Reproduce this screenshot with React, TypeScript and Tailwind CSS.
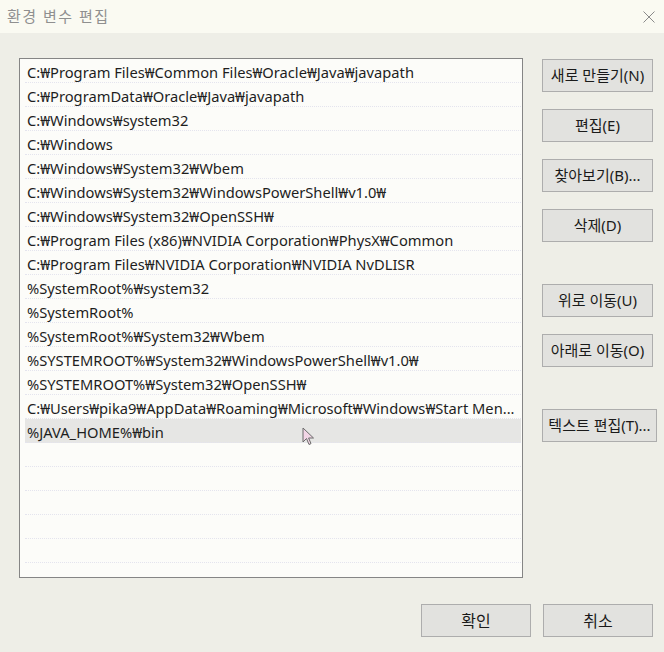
import React from "react";

const paths = [
  "C:₩Program Files₩Common Files₩Oracle₩Java₩javapath",
  "C:₩ProgramData₩Oracle₩Java₩javapath",
  "C:₩Windows₩system32",
  "C:₩Windows",
  "C:₩Windows₩System32₩Wbem",
  "C:₩Windows₩System32₩WindowsPowerShell₩v1.0₩",
  "C:₩Windows₩System32₩OpenSSH₩",
  "C:₩Program Files (x86)₩NVIDIA Corporation₩PhysX₩Common",
  "C:₩Program Files₩NVIDIA Corporation₩NVIDIA NvDLISR",
  "%SystemRoot%₩system32",
  "%SystemRoot%",
  "%SystemRoot%₩System32₩Wbem",
  "%SYSTEMROOT%₩System32₩WindowsPowerShell₩v1.0₩",
  "%SYSTEMROOT%₩System32₩OpenSSH₩",
  "C:₩Users₩pika9₩AppData₩Roaming₩Microsoft₩Windows₩Start Men...",
  "%JAVA_HOME%₩bin",
];

const font = { fontFamily: '"Noto Sans", "Noto Sans CJK KR", sans-serif' };

function Btn({ label, className = "" }: { label: string; className?: string }) {
  return (
    <div
      className={
        "h-[33px] flex items-center justify-center border border-[#adadad] bg-[#e2e2df] text-[15px] text-[#1a1a1a] " +
        className
      }
    >
      {label}
    </div>
  );
}

function Cursor() {
  return (
    <svg width="14" height="20" viewBox="0 0 14 20" className="absolute left-[302px] top-[427px]">
      <path
        d="M1 1 L1 15 L4.5 11.5 L7 17.5 L9 16.6 L6.6 11 L11.5 11 Z"
        fill="#f3d6e6"
        stroke="#6b6b6b"
        strokeWidth="1"
        strokeLinejoin="round"
      />
    </svg>
  );
}

export default function App() {
  const empty = 5;
  return (
    <div className="relative w-[664px] h-[652px] bg-[#eeeee7] flex flex-col overflow-hidden" style={font}>
      {/* title bar */}
      <div className="h-[33px] bg-[#fafaf2] flex items-center justify-between pl-[7px] pr-[8px]">
        <span className="text-[15px] text-[#8f8f8f] tracking-[1.5px]">환경 변수 편집</span>
        <svg width="12" height="12" viewBox="0 0 12 12" className="mr-[1px]">
          <path d="M0.5 0.5 L11.5 11.5 M11.5 0.5 L0.5 11.5" stroke="#8a8a8a" strokeWidth="1" />
        </svg>
      </div>

      <div className="flex pl-[19px] pt-[25px]">
        {/* list */}
        <div className="w-[504px] h-[520px] border border-[#858585] bg-[#fcfcf9] pl-[5px] pr-[1px] overflow-hidden">
          {paths.map((p, i) => (
            <div
              key={i}
              className={
                "h-[24px] flex items-center pl-[2px] pt-[3px] whitespace-nowrap overflow-hidden text-[14.7px] text-[#1e1e1e] border-b border-dotted border-[#e4e4ee] " +
                (i === paths.length - 1 ? "bg-[#e6e6e4]" : "")
              }
            >
              {p}
            </div>
          ))}
          {Array.from({ length: empty }).map((_, i) => (
            <div key={"e" + i} className="h-[24px] border-b border-dotted border-[#e4e4ee]" />
          ))}
        </div>

        {/* side buttons */}
        <div className="flex flex-col pl-[19px] pt-[1px]">
          <Btn label="새로 만들기(N)" className="w-[111px]" />
          <Btn label="편집(E)" className="w-[111px] mt-[17px]" />
          <Btn label="찾아보기(B)..." className="w-[111px] mt-[17px]" />
          <Btn label="삭제(D)" className="w-[111px] mt-[17px]" />
          <Btn label="위로 이동(U)" className="w-[111px] mt-[42px]" />
          <Btn label="아래로 이동(O)" className="w-[111px] mt-[17px]" />
          <Btn label="텍스트 편집(T)..." className="w-[115px] mt-[42px]" />
        </div>
      </div>

      {/* bottom buttons */}
      <div className="flex justify-end gap-[12px] pr-[11px] pt-[26px]">
        <Btn label="확인" className="w-[110px] text-[16px]" />
        <Btn label="취소" className="w-[110px] text-[16px]" />
      </div>

      <Cursor />
    </div>
  );
}
